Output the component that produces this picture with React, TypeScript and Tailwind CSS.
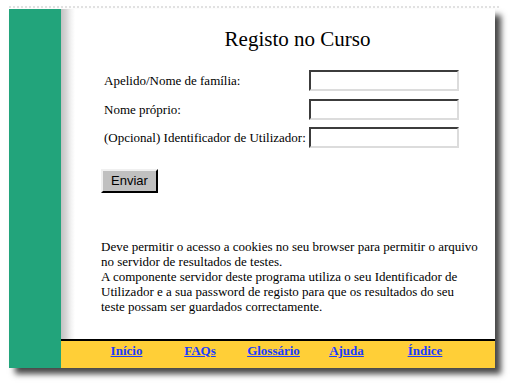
import React from "react";

const serif = { fontFamily: '"Liberation Serif", "Times New Roman", serif' };

function Field() {
  return (
    <div className="w-[150px] h-[21px] bg-white border-2 border-t-[#3c3c3c] border-l-[#3c3c3c] border-b-[#dcdcdc] border-r-[#dcdcdc]" />
  );
}

function Row({ label, className = "" }: { label: string; className?: string }) {
  return (
    <div className={`flex items-center h-[21px] ${className}`}>
      <div className="w-[205px] text-[13px] leading-[15px] whitespace-nowrap">{label}</div>
      <Field />
    </div>
  );
}

export default function App() {
  const links: [string, string][] = [
    ["Início", "w-[73px]"],
    ["FAQs", "w-[74px]"],
    ["Glossário", "w-[73px]"],
    ["Ajuda", "w-[73px]"],
    ["Índice", "w-[84px]"],
  ];
  return (
    <div className="w-[514px] h-[385px] bg-white pt-[6px] pl-[9px] text-black" style={serif}>
      <div className="w-[490px] h-0 border-t-2 border-dotted border-[#e2e2e2]" />
      <div className="mt-[1px] flex w-[486px] h-[359px] shadow-[6px_6px_6px_rgba(0,0,0,0.72)]">
        <div className="w-[52px] bg-[#22a47b]" />
        <div className="flex-1 flex flex-col">
          <div className="flex-1 bg-white bg-[linear-gradient(to_right,#c2c2c2_0px,#d6d6d6_5px,#f2f2f2_10px,#ffffff_14px)]">
            <div className="pt-[18px] pl-[39px] text-center text-[21px] leading-[24px]">Registo no Curso</div>
            <div className="mt-[19px] pl-[43px]">
              <Row label="Apelido/Nome de família:" />
              <Row label="Nome próprio:" className="mt-[8px]" />
              <Row label="(Opcional) Identificador de Utilizador:" className="mt-[7px]" />
            </div>
            <div className="pl-[40px] mt-[20px]">
              <button
                className="w-[57px] h-[24px] bg-[#c0c0c0] border-2 border-t-[#f0f0f0] border-l-[#f0f0f0] border-b-black border-r-black text-[13px] leading-[15px] text-black"
                style={{ fontFamily: '"Liberation Sans", Arial, sans-serif' }}
              >
                Enviar
              </button>
            </div>
            <div className="pl-[40px] mt-[46px] text-[13px] leading-[15px] whitespace-nowrap">
              Deve permitir o acesso a cookies no seu browser para permitir o arquivo
              <br />
              no servidor de resultados de testes.
              <br />
              A componente servidor deste programa utiliza o seu Identificador de
              <br />
              Utilizador e a sua password de registo para que os resultados do seu
              <br />
              teste possam ser guardados correctamente.
            </div>
          </div>
          <div className="h-[29px] border-t-2 border-black bg-[#ffcf37] pl-[29px] pt-[2px] flex">
            {links.map(([t, w]) => (
              <div key={t} className={`${w} text-center text-[13px] leading-[15px] font-bold`}>
                <a href="#" className="text-[#1a3cff] underline">
                  {t}
                </a>
              </div>
            ))}
          </div>
        </div>
      </div>
    </div>
  );
}
